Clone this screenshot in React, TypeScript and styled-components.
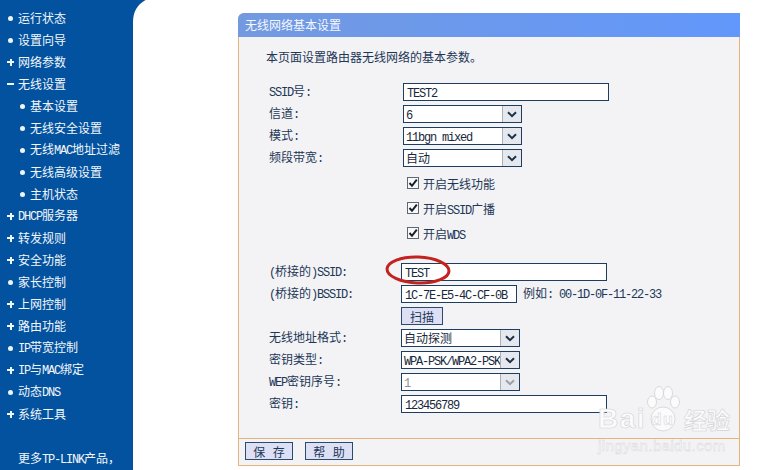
import * as React from "react";
import styled, { createGlobalStyle } from "styled-components";

const GlobalStyle = createGlobalStyle`
  html, body {
    margin: 0;
    padding: 0;
    background: #fff;
  }
  body {
    font-family: "Noto Sans CJK SC", "Liberation Sans", sans-serif;
    font-size: 12px;
    color: #1d3757;
  }
`;

const Page = styled.div`
  position: relative;
  display: flex;
  width: 780px;
  height: 470px;
  overflow: hidden;
  background: #fff;
`;

const Sidebar = styled.nav`
  position: relative;
  flex: none;
  width: 133px;
  padding-top: 7px;
  box-sizing: border-box;
  background: #03529f;
  color: #f2f7fb;
`;

const Corner = styled.svg`
  position: absolute;
  left: 133px;
  top: 0;
`;

const MenuItem = styled.div<{ $sub?: boolean }>`
  display: flex;
  align-items: center;
  height: 22px;
  line-height: 22px;
  white-space: nowrap;
  padding-left: ${p => (p.$sub ? 19 : 7)}px;
`;

const Marker = styled.span<{ $kind: string }>`
  position: relative;
  flex: none;
  width: 7px;
  height: 7px;
  margin-right: 4px;

  &::before {
    content: "";
    position: absolute;
    background: #eef6f6;
    ${p =>
      p.$kind === "dot"
        ? "left: 1px; top: 1px; width: 5px; height: 5px; border-radius: 50%;"
        : "left: 0; top: 2.5px; width: 7px; height: 2px;"}
  }

  &::after {
    content: "";
    position: absolute;
    display: ${p => (p.$kind === "plus" ? "block" : "none")};
    background: #eef6f6;
    left: 2.5px;
    top: 0;
    width: 2px;
    height: 7px;
  }
`;

const MoreLink = styled.div`
  margin-top: 22px;
  padding-left: 18px;
  height: 22px;
  line-height: 22px;
  white-space: nowrap;
`;

const Mono = styled.span`
  font-family: "Liberation Mono", monospace;
  font-size: 12px;
  letter-spacing: -1.2px;
`;

const Main = styled.main`
  flex: 1;
  padding: 13px 0 0 105px;
`;

const Panel = styled.section`
  display: flex;
  flex-direction: column;
  width: 502px;
  height: 453px;
  box-sizing: border-box;
  border: 1px solid #e3b47c;
  border-top: 0;
  border-radius: 6px 0 0 0;
  background: #f3f3f5;
`;

const PanelTitle = styled.h1`
  flex: none;
  margin: 0 -1px;
  height: 24px;
  padding-left: 7px;
  line-height: 24px;
  font-size: 12px;
  font-weight: 400;
  color: #f4f7ff;
  background: linear-gradient(90deg, #739ae0, #6297fb);
  border-radius: 6px 0 0 0;
`;

const PanelBody = styled.div`
  flex: 1;
  padding: 9px 0 0 30px;
`;

const Intro = styled.p`
  margin: 0 0 13px -3px;
  height: 22px;
  line-height: 22px;
`;

const FormGroup = styled.div<{ $gap?: number }>`
  margin-top: ${p => p.$gap || 0}px;
`;

const Row = styled.div<{ $labelWidth: number }>`
  display: grid;
  grid-template-columns: ${p => p.$labelWidth}px 1fr;
  align-items: center;
  height: 22px;
  white-space: nowrap;
`;

const Label = styled.span`
  padding-bottom: 2px;
`;

const CheckRow = styled.div`
  display: flex;
  align-items: center;
  height: 25px;
  margin-left: 138px;
  gap: 4px;
`;

const Box = styled.span`
  display: flex;
  align-items: center;
  justify-content: center;
  width: 10px;
  height: 10px;
  margin-top: -3px;
  border: 1px solid #5d6872;
  background: #f8f8f8;
`;

const Control = styled.div`
  display: flex;
  align-items: center;
  gap: 6px;
`;

const TextField = styled.div<{ $width: number }>`
  width: ${p => p.$width}px;
  height: 18px;
  line-height: 15px;
  box-sizing: border-box;
  padding-left: 3px;
  border: 1px solid #1f3e5f;
  background: #fff;
  color: #17283c;
`;

const SelectBox = styled.div<{ $disabled?: boolean }>`
  display: flex;
  width: 119px;
  height: 18px;
  box-sizing: border-box;
  border: 1px solid #1f3e5f;
  background: #fff;
  color: ${p => (p.$disabled ? "#8c9298" : "#17283c")};
`;

const SelectValue = styled.span`
  flex: 1;
  min-width: 0;
  padding-left: 2px;
  line-height: 15px;
`;

const SelectArrow = styled.span`
  display: flex;
  flex: none;
  align-items: center;
  justify-content: center;
  width: 18px;
  background: #e6e8ef;
  border-left: 1px solid #a9afbb;
`;

const ActionButton = styled.button<{ $width: number }>`
  display: block;
  width: ${p => p.$width}px;
  height: 18px;
  padding: 0;
  box-sizing: border-box;
  border: 1px solid #2a4a6e;
  background: #dde0f5;
  color: #1d3757;
  font: inherit;
  line-height: 15px;
  word-spacing: 5px;
`;

const PanelFooter = styled.div`
  display: flex;
  flex: none;
  gap: 12px;
  height: 27px;
  box-sizing: border-box;
  padding: 3px 0 0 6px;
  border-top: 1px solid #e3b47c;
`;

const Ellipse = styled.svg`
  position: absolute;
  left: 384px;
  top: 253px;
`;

const Watermark = styled.div`
  position: absolute;
  left: 598px;
  top: 384px;
  width: 142px;
  color: #fbfbfc;
  font-family: "Liberation Sans", sans-serif;
  -webkit-text-stroke: 0.6px #d2d2d6;
`;

const MarkRow = styled.div`
  display: flex;
  align-items: flex-end;
  height: 50px;
  font-size: 28px;
  line-height: 30px;
  font-weight: 700;
  letter-spacing: 1.5px;
`;

const PawSlot = styled.svg`
  flex: none;
  margin: 0 3px 2px -1px;
`;

const MarkCjk = styled.span`
  font-family: "Noto Sans CJK SC", sans-serif;
  font-size: 23px;
  letter-spacing: 0;
`;

const MarkUrl = styled.div`
  margin-top: 4px;
  font-size: 15px;
  line-height: 16px;
  letter-spacing: 0.4px;
  -webkit-text-stroke: 0.4px #d2d2d6;
`;

const mix = (text: string) =>
  text.split(/([\x20-\x7e]+)/).map((part, i) =>
    /^[\x20-\x7e]+$/.test(part) ? <Mono key={i}>{part}</Mono> : part
  );

const Chevron = ({ color = "#1c2f44" }: { color?: string }) => (
  <svg width="10" height="7" viewBox="0 0 10 7">
    <path d="M1 1.2 L5 5.2 L9 1.2" fill="none" stroke={color} strokeWidth="2" />
  </svg>
);

const Select = ({ value, disabled }: { value: string; disabled?: boolean }) => (
  <SelectBox $disabled={disabled}>
    <SelectValue>{mix(value)}</SelectValue>
    <SelectArrow>
      <Chevron color={disabled ? "#9aa0a8" : "#1c2f44"} />
    </SelectArrow>
  </SelectBox>
);

const Check = ({ label }: { label: string }) => (
  <CheckRow>
    <Box>
      <svg width="10" height="10" viewBox="0 0 10 10">
        <path d="M1.5 5 L4 7.8 L8.8 1.6" fill="none" stroke="#16202c" strokeWidth="2" />
      </svg>
    </Box>
    <Label>{mix(label)}</Label>
  </CheckRow>
);

const menu: [string, string, boolean?][] = [
  ["dot", "运行状态"],
  ["dot", "设置向导"],
  ["plus", "网络参数"],
  ["minus", "无线设置"],
  ["dot", "基本设置", true],
  ["dot", "无线安全设置", true],
  ["dot", "无线MAC地址过滤", true],
  ["dot", "无线高级设置", true],
  ["dot", "主机状态", true],
  ["plus", "DHCP服务器"],
  ["plus", "转发规则"],
  ["plus", "安全功能"],
  ["dot", "家长控制"],
  ["plus", "上网控制"],
  ["plus", "路由功能"],
  ["dot", "IP带宽控制"],
  ["plus", "IP与MAC绑定"],
  ["dot", "动态DNS"],
  ["plus", "系统工具"],
];

const App = () => {
  return (
    <Page>
      <GlobalStyle />
      <Sidebar>
        {menu.map(([kind, label, sub]) => (
          <MenuItem key={label} $sub={sub}>
            <Marker $kind={kind} />
            <span>{mix(label)}</span>
          </MenuItem>
        ))}
        <MoreLink>{mix("更多TP-LINK产品，")}</MoreLink>
        <Corner width="13" height="22" viewBox="0 0 13 22">
          <path d="M0 0 H12.5 Q0 7 0 22 Z" fill="#03529f" />
        </Corner>
      </Sidebar>
      <Main>
        <Panel>
          <PanelTitle>无线网络基本设置</PanelTitle>
          <PanelBody>
            <Intro>本页面设置路由器无线网络的基本参数。</Intro>
            <FormGroup>
              <Row $labelWidth={134}>
                <Label>{mix("SSID号:")}</Label>
                <TextField $width={206}>{mix("TEST2")}</TextField>
              </Row>
              <Row $labelWidth={134}>
                <Label>{mix("信道:")}</Label>
                <Select value="6" />
              </Row>
              <Row $labelWidth={134}>
                <Label>{mix("模式:")}</Label>
                <Select value="11bgn mixed" />
              </Row>
              <Row $labelWidth={134}>
                <Label>{mix("频段带宽:")}</Label>
                <Select value="自动" />
              </Row>
            </FormGroup>
            <FormGroup $gap={3}>
              <Check label="开启无线功能" />
              <Check label="开启SSID广播" />
              <Check label="开启WDS" />
            </FormGroup>
            <FormGroup $gap={14}>
              <Row $labelWidth={132}>
                <Label>{mix("(桥接的)SSID:")}</Label>
                <TextField $width={206}>{mix("TEST")}</TextField>
              </Row>
              <Row $labelWidth={132}>
                <Label>{mix("(桥接的)BSSID:")}</Label>
                <Control>
                  <TextField $width={116}>{mix("1C-7E-E5-4C-CF-0B")}</TextField>
                  <Label>{mix("例如: 00-1D-0F-11-22-33")}</Label>
                </Control>
              </Row>
              <Row $labelWidth={132}>
                <span />
                <ActionButton $width={42}>扫描</ActionButton>
              </Row>
              <Row $labelWidth={132}>
                <Label>{mix("无线地址格式:")}</Label>
                <Select value="自动探测" />
              </Row>
              <Row $labelWidth={132}>
                <Label>{mix("密钥类型:")}</Label>
                <Select value="WPA-PSK/WPA2-PSK" />
              </Row>
              <Row $labelWidth={132}>
                <Label>{mix("WEP密钥序号:")}</Label>
                <Select value="1" disabled />
              </Row>
              <Row $labelWidth={132}>
                <Label>{mix("密钥:")}</Label>
                <TextField $width={206}>{mix("123456789")}</TextField>
              </Row>
            </FormGroup>
          </PanelBody>
          <PanelFooter>
            <ActionButton $width={48}>保 存</ActionButton>
            <ActionButton $width={48}>帮 助</ActionButton>
          </PanelFooter>
        </Panel>
      </Main>
      <Ellipse width="70" height="34" viewBox="0 0 70 34">
        <ellipse
          cx="34"
          cy="17"
          rx="31"
          ry="13"
          fill="none"
          stroke="#c4221f"
          strokeWidth="3"
          transform="rotate(2 34 17)"
        />
      </Ellipse>
      <Watermark>
        <MarkRow>
          <span>Bai</span>
          <PawSlot width="36" height="46" viewBox="0 0 36 46" fill="#fbfbfc" stroke="#d2d2d6" strokeWidth="0.8">
            <ellipse cx="7" cy="16" rx="4.5" ry="6" />
            <ellipse cx="14" cy="7" rx="4.5" ry="6.5" />
            <ellipse cx="23" cy="7" rx="4.5" ry="6.5" />
            <ellipse cx="30" cy="16" rx="4.5" ry="6" />
            <circle cx="18" cy="33" r="12" />
            <text x="18" y="39" textAnchor="middle" fontSize="16" fontWeight="700" strokeWidth="0.5">
              du
            </text>
          </PawSlot>
          <MarkCjk>经验</MarkCjk>
        </MarkRow>
        <MarkUrl>jingyan.baidu.com</MarkUrl>
      </Watermark>
    </Page>
  );
};

export default App;
